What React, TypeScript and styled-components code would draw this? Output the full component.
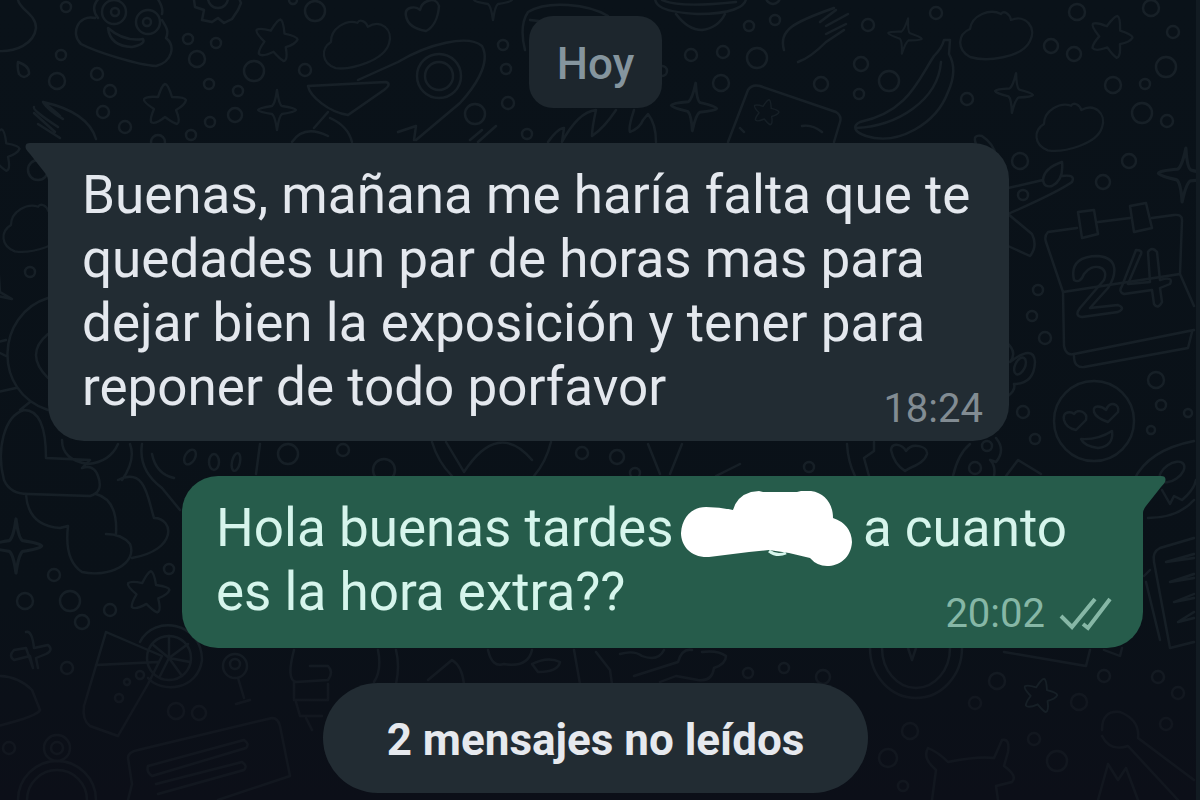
import React from 'react';
import styled, { createGlobalStyle } from 'styled-components';

const GlobalStyle = createGlobalStyle`
  *, *::before, *::after { box-sizing: border-box; }
  body { margin: 0; background: #0a1118; font-family: Roboto, "Noto Sans", sans-serif; }
`;

const Chat = styled.main`
  position: relative;
  display: flex;
  flex-direction: column;
  align-items: center;
  gap: 35px;
  min-height: 100vh;
  padding: 16px 53px 7px 48px;
  overflow: hidden;
  background: linear-gradient(#0a1219 0%, #0a1118 75%, #0c0f18 100%);
  border-right: 4px solid #121b22;
`;

const Wallpaper = styled.svg`
  position: absolute;
  inset: 0;
  width: 100%;
  height: 100%;
  fill: none;
  stroke: url(#ink);
  stroke-width: 2.4;
  stroke-linecap: round;
  stroke-linejoin: round;
`;

const DayChip = styled.time`
  position: relative;
  padding: 20px 28px 16px;
  border-radius: 24px;
  background: #1d262d;
  color: #85959e;
  font-size: 44px;
  font-weight: 500;
  line-height: 56px;
`;

const Bubble = styled.article<{ $own?: boolean }>`
  position: relative;
  display: flow-root;
  align-self: ${(p) => (p.$own ? 'flex-end' : 'flex-start')};
  max-width: min(88%, 961px);
  padding: ${(p) => (p.$own ? '20px 31px 10px 34px' : '20px 26px 8px 34px')};
  border-radius: ${(p) => (p.$own ? '36px 0 36px 36px' : '0 36px 36px 36px')};
  background: ${(p) => (p.$own ? '#265c4b' : '#222c33')};
  color: ${(p) => (p.$own ? '#d6f5ec' : '#e4e8ee')};
`;

const Tail = styled.svg<{ $own?: boolean }>`
  position: absolute;
  top: 0;
  ${(p) => (p.$own ? 'right: -23px; transform: scaleX(-1);' : 'left: -23px;')}
  width: 24px;
  height: 37px;
  fill: ${(p) => (p.$own ? '#265c4b' : '#222c33')};
`;

const Text = styled.p`
  margin: 0;
  font-size: 53px;
  line-height: 64px;
`;

const Scribble = styled.svg`
  width: 171px;
  height: 76px;
  margin: -6px -2px -6px -6px;
  vertical-align: top;
  fill: #fff;
`;

const Meta = styled.span<{ $own?: boolean }>`
  float: right;
  display: flex;
  align-items: center;
  gap: 14px;
  margin-top: 30px;
  color: ${(p) => (p.$own ? '#86b7a6' : '#828c93')};
  font-size: 40px;
  line-height: 48px;
`;

const Ticks = styled.svg`
  width: 53px;
  height: 34px;
  fill: none;
  stroke: currentColor;
  stroke-width: 4;
`;

const Unread = styled.div`
  position: relative;
  padding: 29px 64px 24px;
  border-radius: 55px;
  background: #222c33;
  color: #e6e9ee;
  font-size: 44px;
  font-weight: 700;
  line-height: 57px;
`;

const dots: [number, number, number][] = [
  [68, 7, 5], [190, 39, 5], [218, 43, 5], [199, 59, 8], [63, 55, 5], [59, 81, 8], [99, 74, 6], [112, 91, 6],
  [105, 112, 6], [127, 127, 6], [211, 84, 5], [240, 91, 5], [237, 115, 7], [256, 71, 10], [307, 70, 6],
  [317, 11, 10], [295, 0, 4], [212, 122, 5], [193, 135, 5], [160, 142, 7], [505, 45, 5], [508, 69, 5],
  [510, 103, 6], [477, 114, 10], [529, 134, 5], [751, 26, 5], [777, 20, 5], [693, 55, 6], [725, 52, 6],
  [759, 58, 10], [664, 71, 5], [723, 83, 8], [775, -3, 7], [938, 13, 6], [870, 25, 6], [863, 64, 7],
  [891, 81, 10], [823, 84, 7], [861, 94, 5], [969, 99, 6], [1079, 12, 8], [1153, 8, 8], [1175, 32, 6],
  [1053, 46, 7], [1076, 54, 7], [1168, 67, 10], [1115, 85, 8], [1147, 84, 5], [1144, 113, 10], [1169, 121, 6],
  [1022, 161, 8], [1131, 161, 7], [1105, 182, 7], [1025, 195, 5], [1040, 290, 5], [1034, 316, 5],
  [1047, 338, 6], [1158, 380, 8], [1163, 405, 5], [1153, 430, 4], [1190, 413, 4], [1025, 412, 6],
  [1037, 439, 5], [989, 446, 5], [977, 468, 6], [290, 454, 10], [345, 450, 6], [386, 470, 11], [56, 575, 6],
  [27, 601, 8], [72, 601, 10], [112, 610, 6], [84, 622, 7], [171, 569, 5], [69, 668, 6], [178, 711, 8],
  [201, 713, 7], [11, 748, 6], [584, 453, 6], [619, 457, 7], [637, 473, 5], [811, 467, 5], [750, 673, 5],
  [786, 668, 5], [825, 677, 7], [999, 681, 8], [977, 703, 6], [912, 731, 8], [1036, 739, 6], [1081, 702, 8],
  [1059, 761, 10], [890, 758, 9], [905, 786, 5], [1106, 676, 6], [1160, 677, 6], [1180, 693, 6], [1168, 724, 6],
  [32, 272, 5], [40, 170, 10],
];

// x, y, rotation, scale
type Placement = [number, number, number, number];

const STAR = 'M0 -21Q3 -21 7 -8Q20 -8 21 -5Q20 0 11 5Q16 17 12 19Q8 18 0 12Q-10 20 -14 17Q-15 13 -11 4Q-22 -3 -21 -6Q-18 -9 -7 -8Q-3 -20 0 -21Z';
const SPARKLE = 'M0 -20Q2 -5 5 -4Q18 -2 19 0Q18 2 5 4Q2 6 0 20Q-2 6 -5 4Q-18 2 -19 0Q-18 -2 -5 -4Q-2 -6 0 -20Z';
const CLOUD = 'M-28 -5C-26 -19 -8 -26 3 -20C6 -24 12 -20 13 -14C28 -20 39 -6 32 7C24 24 -12 28 -28 23C-42 15 -40 0 -28 -5Z';

const stars: Placement[] = [
  [278, 40, 12, 1], [167, 105, 0, 1], [1113, 36, 18, 1], [0, 150, 10, 1], [150, 592, 8, 1], [1042, 695, 14, 0.8],
];
const sparkles: Placement[] = [
  [279, 110, 0, 1], [495, 0, 0, 1], [696, 107, 4, 1.2], [907, 36, 10, 0.9], [1016, 93, 6, 1], [1186, 175, 4, 1.35],
  [18, 546, 0, 1.35],
];
const clouds: Placement[] = [
  [360, 42, -10, 0.95], [1000, 34, 0, 1], [1073, 125, -8, 0.95], [40, 226, -8, 0.95],
];

const place = ([x, y, r, s]: Placement) => `translate(${x} ${y}) rotate(${r}) scale(${s})`;

const Doodles = () => (
  <Wallpaper viewBox="0 0 1200 800" preserveAspectRatio="xMidYMin slice" aria-hidden="true">
    <defs>
      <linearGradient id="ink" gradientUnits="userSpaceOnUse" x1="0" y1="0" x2="0" y2="800">
        <stop offset="0" stopColor="#172027" />
        <stop offset="0.78" stopColor="#161f26" />
        <stop offset="0.88" stopColor="#12171f" />
      </linearGradient>
    </defs>
    {dots.map(([x, y, r]) => <circle key={`${x}-${y}`} cx={x} cy={y} r={r} />)}
    {/* the placed shapes carry their own coordinates, so they take a plain colour */}
    <g stroke="#161f26">
      {stars.map((p) => <path key={place(p)} d={STAR} transform={place(p)} />)}
      {sparkles.map((p) => <path key={place(p)} d={SPARKLE} transform={place(p)} />)}
      {clouds.map((p) => <path key={place(p)} d={CLOUD} transform={place(p)} />)}
      <path d={STAR} transform="translate(768 112) rotate(14) scale(.6)" />
    </g>
    {/* cloud, drop and hand in the left corner */}
    <path d="M20 0C22 10 38 14 38 28C36 44 18 52 0 51M20 62Q32 66 31 74Q26 80 21 74Q19 68 20 62Z" />
    <path d="M98 139Q90 112 45 102Q50 110 65 119M36 107Q34 110 60 127M36 113L57 132M40 124L62 138M45 102Q58 112 62 116" />
    {/* smiling swirl */}
    <path d="M97 18C80 14 72 34 83 44C98 52 140 65 158 66C174 62 178 46 168 38C172 30 166 24 164 20M100 18C92 8 98 0 104 -4M164 14C166 6 160 0 158 -4M110 28Q112 46 134 47Q148 44 145 39Q126 42 110 28Z" />
    <circle cx="116" cy="12" r="12" /><circle cx="150" cy="22" r="12" /><circle cx="117" cy="12" r="4" /><circle cx="149" cy="22" r="4" />
    {/* gear */}
    <path d="M196 0L197 7L206 10L204 20L214 22L220 18L226 23L234 19L240 10L243 3L240 -4" /><circle cx="220" cy="-2" r="10" />
    {/* rocket */}
    <path d="M360 80L400 62C430 44 470 34 484 46C494 64 474 90 462 103L418 140M310 86L388 82Q394 84 386 90L350 115C330 112 312 96 310 86ZM330 112L316 128M332 118Q350 126 354 142M294 142Q306 124 330 136M400 132L418 126L416 140" />
    <circle cx="441" cy="76" r="22" /><circle cx="441" cy="76" r="14" />
    {/* heart, saucer and planet */}
    <path d="M408 16C406 6 418 6 422 10C424 0 438 -4 441 6C440 20 434 28 428 31Q410 28 408 16ZM527 50C522 30 526 18 530 12C550 0 590 4 610 16M532 20Q560 24 580 18" />
    <path d="M657 -4C656 6 664 12 700 14C730 14 750 8 748 -4M664 0Q680 8 738 2M678 14Q690 30 704 30Q720 28 727 14" />
    {/* flames under the date */}
    <path d="M472 140L484 130M480 142L498 126M550 142Q560 128 566 128L564 142Q580 112 598 110Q594 128 594 136Q606 128 618 110M636 110Q630 128 632 132Q642 128 645 120L650 114Q658 124 658 142" />
    {/* playing card */}
    <path d="M730 142L750 90Q754 84 762 86L838 112Q844 116 842 122L836 142M804 126Q814 124 824 132M742 128L746 132" />
    {/* clapping hand */}
    <path d="M786 50C780 30 796 22 836 8M800 62Q812 58 828 42L846 30M822 22L838 10M828 26L850 14M828 34L848 24" />
    {/* banana */}
    <path d="M946 40L952 40L951 54Q960 70 950 92C938 124 900 146 868 136C856 132 854 126 862 122C910 112 920 80 936 56Q944 48 946 40ZM858 128C900 126 940 100 943 62" />
    {/* spoon and knife */}
    <path d="M978 144Q974 134 984 136Q996 144 998 156M1010 188L1045 180Q1046 168 1064 162Q1066 180 1054 186Q1046 188 1045 180M1064 176Q1078 174 1074 182Q1060 192 1010 214L1034 234Q1040 246 1032 256L1010 246" />
    {/* calendar */}
    <path d="M1079 228L1050 232Q1046 236 1048 242L1065 292L1182 274L1184 220Q1184 214 1176 215L1154 218M1100 222L1132 218M1065 292L1066 346Q1068 356 1076 354L1196 330M1182 274L1196 306M1076 356Q1076 368 1086 367L1190 348L1194 332" />
    <path d="M1080 212L1096 210L1100 234L1084 238ZM1132 206L1148 203L1154 228L1136 232Z" />
    <path d="M1076 280C1072 262 1084 256 1100 256C1122 258 1118 276 1110 288L1092 308L1120 305Q1128 308 1120 312L1084 317Q1076 316 1082 308L1106 280C1112 266 1094 262 1086 274Q1082 284 1076 280ZM1138 250Q1146 250 1142 256L1130 284L1152 282L1150 252Q1154 246 1159 252L1162 280Q1176 276 1172 284L1162 288L1164 302Q1160 310 1156 304L1154 290L1126 294Q1120 292 1124 286Z" />
    {/* heart-eyed face */}
    <circle cx="1096" cy="421" r="40" />
    <path d="M1066 420C1064 410 1074 412 1076 414C1080 408 1090 412 1088 420L1078 430Q1068 428 1066 420ZM1096 412C1094 404 1104 406 1108 410C1112 400 1122 404 1120 412L1110 422Q1098 418 1096 412ZM1083 439Q1100 440 1114 431Q1116 446 1100 448Q1086 446 1083 439Z" />
    {/* doughnut and flower by the right edge */}
    <path d="M1136 480Q1150 450 1196 441M1008 342Q1020 352 1012 362Q1036 344 1037 362Q1036 384 1016 384Q1018 390 1010 396" />
    <ellipse cx="1022" cy="366" rx="5" ry="9" transform="rotate(25 1022 366)" /><ellipse cx="1174" cy="472" rx="14" ry="8" transform="rotate(-35 1174 472)" />
    <path d="M1164 490L1172 504L1176 496L1184 500Q1196 490 1198 480M1150 518Q1180 518 1196 500" />
    {/* heart and cookies between the two messages */}
    <path d="M849 444Q850 462 857 476M876 442L876 451L866 458L871 476M893 450C894 442 904 444 908 451C914 442 930 446 929 454C926 464 914 466 907 471Q896 464 893 450ZM955 476Q960 454 972 444M998 438Q1008 450 998 462L992 460Q998 466 996 476M1008 476L1020 460L1043 474" />
    {/* wheel behind the first message */}
    <path d="M50 298C-2 314 -6 392 50 410M50 334Q26 354 50 378M0 342L8 340M0 352L8 356M0 262L2 292L14 299L0 296M0 392L18 388" />
    {/* dog resting on the left */}
    <path d="M26 410C6 416 -2 450 6 480Q12 494 30 494L92 496Q106 492 100 476Q96 464 84 468L92 460L48 458C48 430 42 410 26 410ZM22 410L32 402M28 494Q30 526 62 528L70 526Q66 560 84 572C110 578 140 564 132 544Q124 534 108 534M98 494Q120 500 118 534M120 480C148 466 150 500 156 518C176 518 180 550 134 558M64 440Q64 460 90 464Q112 462 120 444M132 444Q138 460 124 480M144 444Q140 470 164 488L182 510M154 454Q158 474 176 478" />
    <ellipse cx="192" cy="457" rx="5" ry="8" transform="rotate(30 192 457)" /><ellipse cx="216" cy="462" rx="5" ry="8" /><ellipse cx="238" cy="462" rx="4" ry="9" transform="rotate(12 238 462)" />
    <path d="M262 444L258 474M434 442Q440 462 454 476M448 442L466 472Q500 420 534 460M553 442Q548 462 536 476M650 444L662 474M684 444L672 474M718 476L742 464" />
    {/* plus sign */}
    <path d="M28 632Q34 630 36 648L50 645Q56 650 48 654L38 658L40 668M35 668L32 656L16 660Q10 656 16 650L28 648Z" />
    {/* cocktail with a lemon slice */}
    <path d="M108 632L164 656L150 684L120 736L92 726Q84 720 86 706ZM98 665L160 662M142 642C156 614 204 622 204 660C200 690 164 694 150 678M171 658L171 636M171 658L154 644M171 658L190 644M171 658L192 662M171 658L184 676M171 658L162 676" />
    <circle cx="171" cy="658" r="22" /><circle cx="142" cy="675" r="4" /><circle cx="129" cy="682" r="3" /><circle cx="121" cy="698" r="4" />
    {/* medal and stacked shape */}
    <circle cx="237" cy="666" r="12" /><circle cx="237" cy="664" r="5" />
    <path d="M240 678L246 698M238 704L252 700M296 650Q288 680 298 682L330 680Q336 672 330 666L312 666M296 682L296 700L330 700L330 684M298 702L302 716L324 716M308 718L314 730M380 650Q384 670 376 682M0 676Q20 676 34 690L42 710Q40 716 0 726" />
    {/* stopwatch and note */}
    <circle cx="59" cy="748" r="13" /><circle cx="59" cy="748" r="6" /><circle cx="59" cy="800" r="39" /><circle cx="59" cy="800" r="30" />
    <path d="M130 800L134 784L130 758Q130 752 140 750L274 718Q280 718 282 726L292 776L220 800M150 766L246 740Q252 744 248 748L154 776Q148 772 150 766ZM158 784L244 762Q250 766 246 770L160 794" />
    {/* shapes between the sent message and the counter */}
    <path d="M398 650Q402 666 398 684M430 680L454 660Q464 666 466 684M490 650Q494 668 506 664Q530 668 534 650M534 664Q550 656 562 662Q560 672 540 672ZM576 650L582 684M598 652L612 670L614 684M622 654Q636 650 644 656Q660 662 666 650M636 676L680 662Q684 648 694 650M704 652Q720 650 728 656Q728 664 716 668Q714 682 700 680L678 676L662 682" />
    {/* alarm clock */}
    <path d="M872 648A46 50 0 0 0 964 648M884 648A34 40 0 0 0 952 648M910 648L914 660L918 648M1006 652L1088 666L1092 650M1106 650L1122 656L1124 648" />
    {/* notebook */}
    <path d="M1196 538L1162 548Q1154 552 1156 562L1172 648L1196 642M1146 576L1152 570M1148 582L1162 640M1196 554L1168 562L1196 558M1196 574L1172 582L1196 578M1196 594L1176 602L1196 598M1196 612L1180 622L1196 618" />
    {/* robot head and wrench */}
    <path d="M934 800L938 770Q924 758 930 748Q940 752 950 762Q980 756 996 758L1004 740Q1012 738 1010 752L1006 766Q1020 776 1014 782L998 786L1000 800M1104 730Q1104 710 1122 712Q1142 720 1140 738L1196 780M1104 736Q1112 752 1130 746L1180 800M1100 800L1110 764L1120 780L1128 768L1140 800" />
  </Wallpaper>
);

const TailShape = ({ own }: { own?: boolean }) => (
  <Tail $own={own} viewBox="0 0 24 37" aria-hidden="true">
    <path d="M24 0H5Q-1 0 1 6Q2 8 5 11L20 30Q23 34 23 37H24Z" />
  </Tail>
);

export default function App() {
  return (
    <>
      <GlobalStyle />
      <Chat>
        <Doodles />
        <DayChip>Hoy</DayChip>
        <Bubble>
          <TailShape />
          <Text>
            Buenas, mañana me haría falta que te quedades un par de horas mas para dejar bien la exposición y tener
            para reponer de todo porfavor
            <Meta><time>18:24</time></Meta>
          </Text>
        </Bubble>
        <Bubble $own>
          <TailShape own />
          <Text>
            Hola buenas tardes{' '}
            <Scribble viewBox="0 0 171 76" aria-hidden="true">
              <path d="M25 17Q38 17 52 20Q56 6 70 2L78 1L82 2H116L120 1H130C144 3 152 14 152 28Q170 34 171 52C170 68 158 76 146 76Q136 76 129 68L108 63L88 60L68 62L28 67C10 68 0 56 0 43C1 28 10 17 25 17Z" />
              <path d="M88 61Q96 67 105 63" fill="none" stroke="#d6f5ec" strokeWidth="3" />
            </Scribble>{' '}
            a cuanto es la hora extra??
            <Meta $own>
              <time>20:02</time>
              <Ticks viewBox="0 0 53 34" role="img" aria-label="Entregado">
                <path d="M2 19L13 30L36 2M24 27L29 31L51 2" />
              </Ticks>
            </Meta>
          </Text>
        </Bubble>
        <Unread role="status">2 mensajes no leídos</Unread>
      </Chat>
    </>
  );
}
